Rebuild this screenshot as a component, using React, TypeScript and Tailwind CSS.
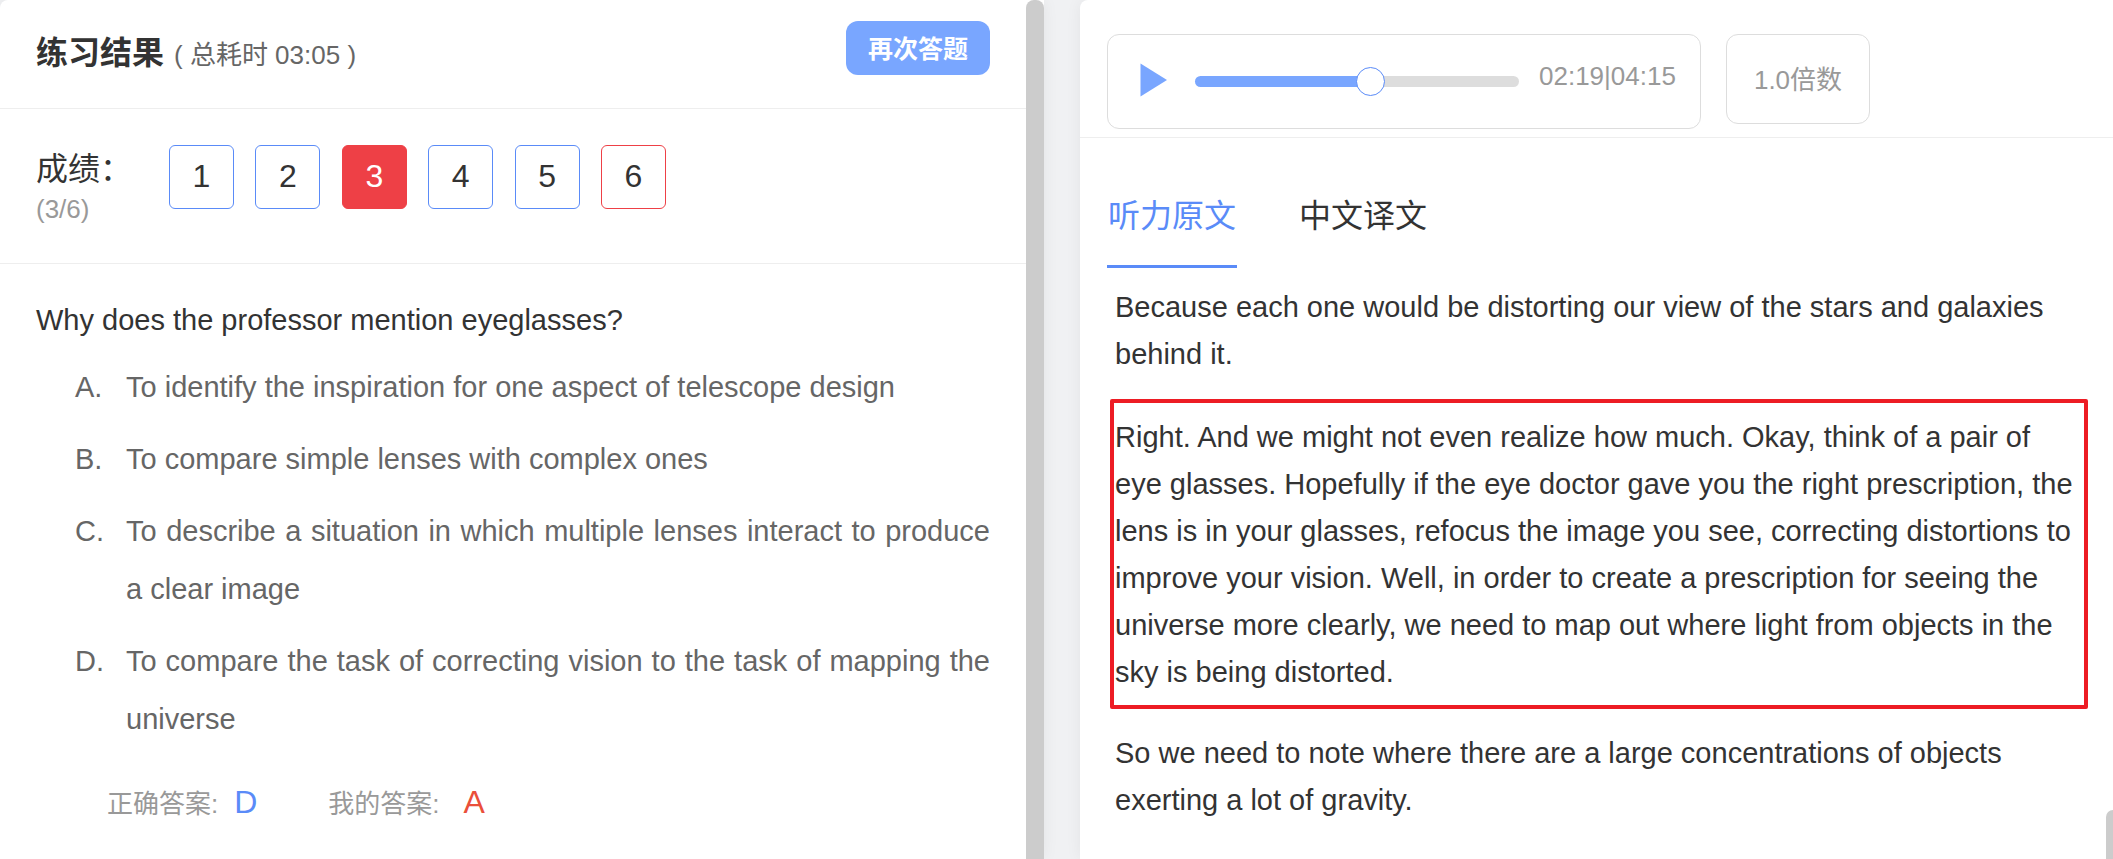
import { useState, type CSSProperties } from "react";
import clsx from "clsx";

type Status = "right" | "wrong" | "active";

const scores: Status[] = ["right", "right", "active", "right", "right", "wrong"];

const options = [
  { key: "A", text: "To identify the inspiration for one aspect of telescope design" },
  { key: "B", text: "To compare simple lenses with complex ones" },
  { key: "C", text: "To describe a situation in which multiple lenses interact to produce a clear image" },
  { key: "D", text: "To compare the task of correcting vision to the task of mapping the universe" },
];

const transcript = [
  { text: "Because each one would be distorting our view of the stars and galaxies behind it.", marked: false },
  {
    text: "Right. And we might not even realize how much. Okay, think of a pair of eye glasses. Hopefully if the eye doctor gave you the right prescription, the lens is in your glasses, refocus the image you see, correcting distortions to improve your vision. Well, in order to create a prescription for seeing the universe more clearly, we need to map out where light from objects in the sky is being distorted.",
    marked: true,
  },
  { text: "So we need to note where there are a large concentrations of objects exerting a lot of gravity.", marked: false },
];

const DURATION = 255;

function formatTime(seconds: number) {
  const pad = (n: number) => String(n).padStart(2, "0");
  return `${pad(Math.floor(seconds / 60))}:${pad(seconds % 60)}`;
}

function ResultPanel() {
  return (
    <main className="flex min-w-0 rounded-tl-lg bg-white shadow-[0_0_16px_rgba(0,0,0,0.06)]">
      <div className="min-w-0 flex-1">
        <header className="flex h-[109px] items-start justify-between border-b border-[#eeeeee] pl-9 pr-9 pt-[21px]">
          <h1 className="flex items-baseline gap-2.5 pt-2 text-[32px] leading-[48px] font-bold text-[#333333]">
            练习结果
            <span className="text-[26px] font-normal text-[#666666]">( 总耗时 03:05 )</span>
          </h1>
          <button type="button" className="h-[54px] w-36 rounded-xl bg-[#79a6ff] pt-0.5 text-[25px] leading-9 font-bold text-white">
            再次答题
          </button>
        </header>

        <section className="flex h-[155px] items-start border-b border-[#eeeeee] pl-9 pt-9">
          <div className="w-[133px]">
            <h2 className="text-[32px] leading-[48px] text-[#333333]">成绩：</h2>
            <p className="text-[26px] leading-8 text-[#999999]">(3/6)</p>
          </div>
          <div className="flex w-[497px] justify-between">
            {scores.map((status, i) => (
              <button
                key={i}
                type="button"
                className={clsx(
                  "h-16 w-[65px] rounded-md border pb-0.5 text-[32px] leading-[58px]",
                  status === "right" && "border-[#5a8bf8] text-[#333333]",
                  status === "wrong" && "border-[#ee4046] text-[#333333]",
                  status === "active" && "border-[#ee4046] bg-[#ee4046] text-white",
                )}
              >
                {i + 1}
              </button>
            ))}
          </div>
        </section>

        <section className="px-9 pt-[27px]">
          <p className="text-[29px] leading-[58px] text-[#333333]">Why does the professor mention eyeglasses?</p>
          <ol className="mt-[9px] flex flex-col gap-[14px] pl-[39px] text-[29px] leading-[58px] text-[#666666]">
            {options.map((option) => (
              <li key={option.key} className="flex">
                <span className="w-[51px] shrink-0">{option.key}.</span>
                <span className="flex-1 text-justify">{option.text}</span>
              </li>
            ))}
          </ol>
          <dl className="mt-[30px] flex items-baseline pl-[71px] text-[26px] leading-[48px] text-[#999999]">
            <dt>正确答案:</dt>
            <dd className="ml-4 text-[32px] text-[#5a8bf8]">D</dd>
            <dt className="ml-[71px]">我的答案:</dt>
            <dd className="ml-6 text-[32px] text-[#ea4f3a]">A</dd>
          </dl>
        </section>
      </div>
      <div className="w-[18px] shrink-0 rounded-t-lg bg-[#cccccc]" />
    </main>
  );
}

function Player() {
  const [time, setTime] = useState(139);
  const progress = { "--progress": `${(time / DURATION) * 100}%` } as CSSProperties;

  return (
    <header className="flex h-[138px] items-start gap-[25px] border-b border-[#eeeeee] pl-[27px] pt-[34px]">
      <div className="flex h-[95px] w-[594px] items-start rounded-xl border border-[#dddddd] pl-8 pt-6">
        <button type="button" aria-label="播放" className="mt-1 mr-7 shrink-0">
          <svg width="27" height="34" viewBox="0 0 27 34" fill="#79a6ff" aria-hidden="true">
            <path d="M0.5 0.5 27 17 0.5 33.5Z" />
          </svg>
        </button>
        <input
          type="range"
          aria-label="播放进度"
          min={0}
          max={DURATION}
          value={time}
          onChange={(e) => setTime(Number(e.target.value))}
          style={progress}
          className="mt-2 h-[29px] w-[324px] shrink-0 cursor-pointer appearance-none bg-transparent [&::-webkit-slider-runnable-track]:h-[11px] [&::-webkit-slider-runnable-track]:rounded-full [&::-webkit-slider-runnable-track]:bg-[linear-gradient(to_right,#79a6ff_var(--progress),#dddddd_var(--progress))] [&::-webkit-slider-thumb]:-mt-[9px] [&::-webkit-slider-thumb]:size-[29px] [&::-webkit-slider-thumb]:appearance-none [&::-webkit-slider-thumb]:rounded-full [&::-webkit-slider-thumb]:border [&::-webkit-slider-thumb]:border-[#5a8bf8] [&::-webkit-slider-thumb]:bg-white"
        />
        <span className="ml-5 text-[26px] leading-[34px] whitespace-nowrap text-[#999999]">
          {formatTime(time)}|{formatTime(DURATION)}
        </span>
      </div>
      <button type="button" className="h-[90px] w-36 rounded-xl border border-[#dddddd] pt-0.5 text-[26px] leading-9 text-[#999999]">
        1.0倍数
      </button>
    </header>
  );
}

function TranscriptPanel() {
  return (
    <aside className="relative min-w-0 rounded-tl-lg bg-white shadow-[0_0_16px_rgba(0,0,0,0.06)]">
      <Player />
      <nav className="flex gap-[61px] pl-[27px] pt-[54px] text-[32px] leading-[48px] text-[#333333]">
        <button type="button" className="w-[130px] border-b-[3px] border-[#5a8bf8] pb-[25px] text-[#5a8bf8]">
          听力原文
        </button>
        <button type="button" className="w-[130px] border-b-[3px] border-transparent pb-[25px]">
          中文译文
        </button>
      </nav>
      <article className="flex flex-col gap-[21px] pl-[30px] pr-[25px] pt-4 text-[29px] leading-[47px] text-[#333333]">
        {transcript.map((paragraph, i) => (
          <p
            key={i}
            className={clsx(
              "rounded-xs",
              paragraph.marked ? "border-4 border-[#ed1c24] pr-2.5 pl-px pt-[11px] pb-[9px]" : "pl-[5px] pr-[14px]",
            )}
          >
            {paragraph.text}
          </p>
        ))}
      </article>
      <div className="absolute right-0 bottom-0 h-[49px] w-[7px] rounded-tl-lg bg-[#cccccc]" />
    </aside>
  );
}

export default function App() {
  return (
    <div className="grid h-screen grid-cols-[1044fr_1033fr] gap-9 overflow-hidden bg-[#f0f1f3] font-['Liberation_Sans','Noto_Sans_CJK_SC',sans-serif]">
      <ResultPanel />
      <TranscriptPanel />
    </div>
  );
}
